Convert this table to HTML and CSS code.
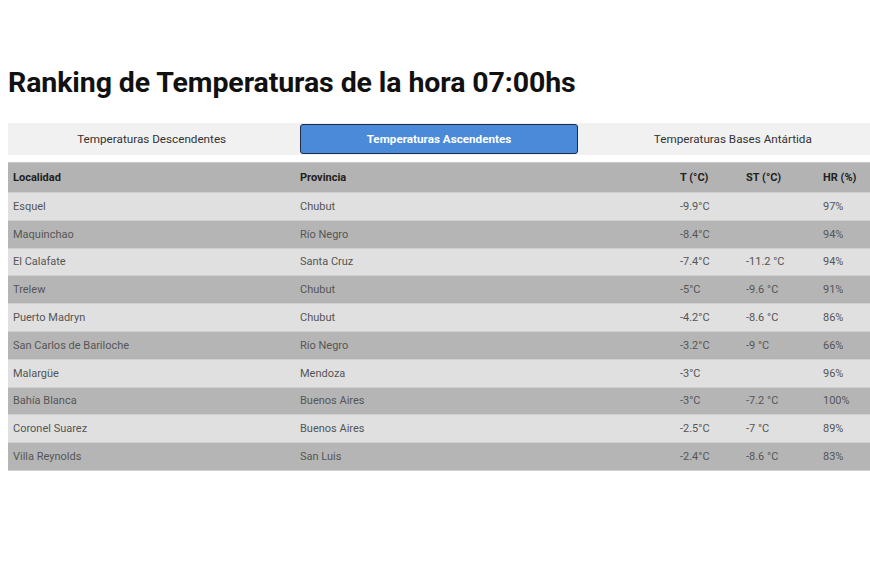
FILE: index.html
```html
<!DOCTYPE html>
<html lang="es">
<head>
<meta charset="utf-8">
<title>Ranking de Temperaturas</title>
<link rel="stylesheet" href="styles.css">
</head>
<body>
<div class="page">
  <h1 class="title">Ranking de Temperaturas de la hora 07:00hs</h1>
  <div class="tabs">
    <div class="tab">Temperaturas Descendentes</div>
    <div class="tab active">Temperaturas Ascendentes</div>
    <div class="tab tab-last">Temperaturas Bases Antártida</div>
  </div>
  <table class="ranking">
    <colgroup>
      <col class="c-loc"><col class="c-prov"><col class="c-t"><col class="c-st"><col class="c-hr">
    </colgroup>
    <thead>
      <tr><th>Localidad</th><th>Provincia</th><th>T (°C)</th><th>ST (°C)</th><th>HR (%)</th></tr>
    </thead>
    <tbody>
      <tr><td>Esquel</td><td>Chubut</td><td>-9.9°C</td><td></td><td>97%</td></tr>
      <tr><td>Maquinchao</td><td>Río Negro</td><td>-8.4°C</td><td></td><td>94%</td></tr>
      <tr><td>El Calafate</td><td>Santa Cruz</td><td>-7.4°C</td><td>-11.2 °C</td><td>94%</td></tr>
      <tr><td>Trelew</td><td>Chubut</td><td>-5°C</td><td>-9.6 °C</td><td>91%</td></tr>
      <tr><td>Puerto Madryn</td><td>Chubut</td><td>-4.2°C</td><td>-8.6 °C</td><td>86%</td></tr>
      <tr><td>San Carlos de Bariloche</td><td>Río Negro</td><td>-3.2°C</td><td>-9 °C</td><td>66%</td></tr>
      <tr><td>Malargüe</td><td>Mendoza</td><td>-3°C</td><td></td><td>96%</td></tr>
      <tr><td>Bahía Blanca</td><td>Buenos Aires</td><td>-3°C</td><td>-7.2 °C</td><td>100%</td></tr>
      <tr><td>Coronel Suarez</td><td>Buenos Aires</td><td>-2.5°C</td><td>-7 °C</td><td>89%</td></tr>
      <tr><td>Villa Reynolds</td><td>San Luis</td><td>-2.4°C</td><td>-8.6 °C</td><td>83%</td></tr>
    </tbody>
  </table>
</div>
</body>
</html>
```
FILE: styles.css
```css
html, body {
  margin: 0;
  padding: 0;
  background: #ffffff;
}
body {
  font-family: Roboto, "Liberation Sans", sans-serif;
  color: #333;
}
.page {
  padding: 65px 0 0 8px;
}
.title {
  margin: 0 0 23px 0;
  font-size: 28.5px;
  font-weight: 700;
  line-height: 35px;
  color: #111;
  letter-spacing: -0.1px;
}
.tabs {
  display: flex;
  background: #f1f1f1;
  height: 32px;
  align-items: center;
  margin-bottom: 7px;
}
.tab {
  flex: 1 1 0;
  text-align: center;
  font-size: 11.7px;
  color: #333;
  line-height: 28px;
  margin: 0 5px;
  border: 1px solid transparent;
  border-radius: 3px;
}
.tab-last {
  text-indent: 13px;
}
.tab.active {
  background: #4a8ad9;
  border-color: #1c2b48;
  color: #ffffff;
  font-weight: 700;
}
.ranking {
  width: 862px;
  border-collapse: collapse;
  table-layout: fixed;
  font-size: 11px;
}
.c-loc { width: 287px; }
.c-prov { width: 380px; }
.c-t { width: 66px; }
.c-st { width: 77px; }
.c-hr { width: 52px; }
.ranking th {
  text-align: left;
  font-weight: 700;
  color: #222;
  background: #b3b3b3;
  height: 29px;
  padding: 0 5px;
  border-top: 1px solid #c8c8c8;
}
.ranking td {
  height: 26.8px;
  padding: 0 5px;
  color: #555;
  border-top: 1px solid #d0d0d0;
}
.ranking tbody tr:nth-child(odd) td { background: #e0e0e0; }
.ranking tbody tr:nth-child(even) td { background: #b5b5b5; }
.ranking tbody tr:last-child td { border-bottom: 1px solid #d0d0d0; }
```
